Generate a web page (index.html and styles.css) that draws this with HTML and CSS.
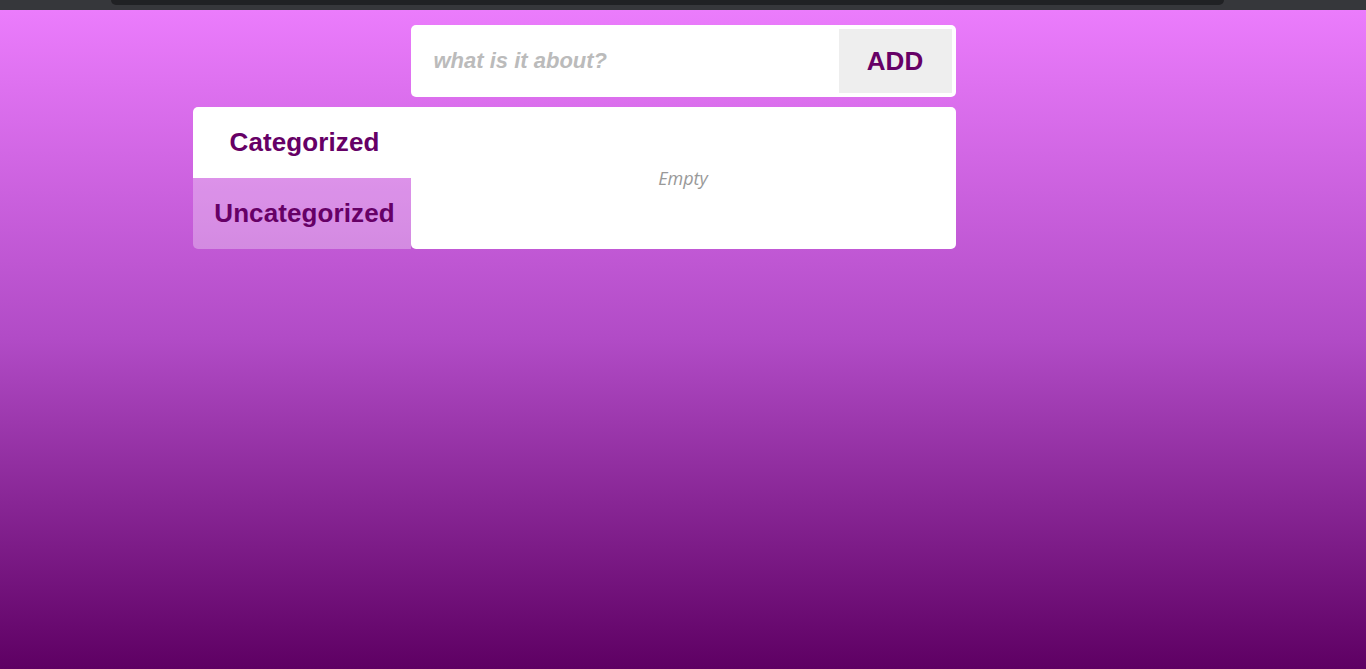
FILE: index.html
```html
<!DOCTYPE html>
<html lang="en">
<head>
<meta charset="utf-8">
<title>Notes</title>
<link rel="stylesheet" href="styles.css">
</head>
<body>
<div class="chrome"><div class="chrome-inner"></div></div>
<main class="page">
  <div class="column">
    <form class="add-bar">
      <input class="add-input" type="text" placeholder="what is it about?">
      <button class="add-btn" type="button">ADD</button>
    </form>
    <section class="panel">
      <nav class="tabs">
        <div class="tab tab-active">Categorized</div>
        <div class="tab tab-idle">Uncategorized</div>
      </nav>
      <div class="content">
        <p class="empty">Empty</p>
      </div>
    </section>
  </div>
</main>
</body>
</html>
```
FILE: styles.css
```css
* { box-sizing: border-box; }
html, body { margin: 0; height: 100%; }
body {
  font-family: "Liberation Sans", Arial, sans-serif;
  display: flex;
  flex-direction: column;
  background: #5e0063;
}
.chrome {
  height: 10px;
  background: #36373b;
  display: flex;
  padding-left: 111px;
  flex: none;
}
.chrome-inner {
  width: 1113px;
  height: 5px;
  background: #202124;
  border-radius: 0 0 8px 8px;
}
.page {
  flex: 1;
  background: linear-gradient(to bottom, #eb7cfc 0%, #b14bc6 50%, #5e0063 100%);
  padding-top: 15px;
}
.column {
  width: 545px;
  margin: 0 auto;
  display: flex;
  flex-direction: column;
  gap: 10px;
}
.add-bar {
  margin: 0;
  display: flex;
  background: #fff;
  border-radius: 5px;
  padding: 4px;
  height: 72px;
}
.add-input {
  flex: 1;
  border: none;
  outline: none;
  background: transparent;
  font-family: "Liberation Sans", Arial, sans-serif;
  font-size: 22px;
  font-weight: bold;
  font-style: italic;
  padding: 0 18px 0 19px;
  color: #660066;
}
.add-input::placeholder { color: #bbbbbb; }
.add-btn {
  width: 113px;
  border: none;
  background: #eeeeee;
  color: #660066;
  font-family: "Liberation Sans", Arial, sans-serif;
  font-size: 26px;
  font-weight: bold;
  padding: 0;
}
.panel {
  display: flex;
  margin-left: -218px;
  height: 142px;
}
.tabs {
  width: 218px;
  display: flex;
  flex-direction: column;
}
.tab {
  flex: 1;
  display: flex;
  align-items: center;
  justify-content: center;
  padding-left: 6px;
  font-size: 26px;
  font-weight: bold;
  color: #660066;
  letter-spacing: 0.1px;
}
.tab-active {
  background: #fff;
  border-radius: 5px 0 0 0;
}
.tab-idle {
  background: rgba(255, 255, 255, 0.3);
  border-radius: 0 0 0 5px;
}
.content {
  flex: 1;
  background: #fff;
  border-radius: 0 5px 5px 5px;
  display: flex;
  align-items: center;
  justify-content: center;
}
.empty {
  margin: 0;
  font-family: "Open Sans", sans-serif;
  font-style: italic;
  font-size: 18px;
  color: #999999;
}
```
